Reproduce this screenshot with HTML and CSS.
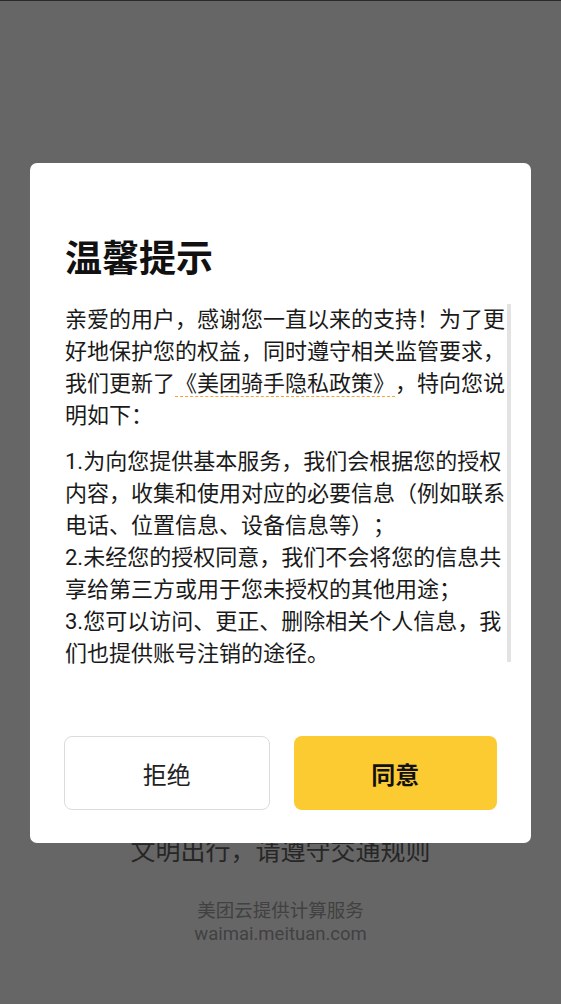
FILE: index.html
```html
<!DOCTYPE html>
<html lang="zh-CN">
<head>
  <meta charset="UTF-8" />
  <meta name="viewport" content="width=device-width, initial-scale=1.0"/>
  <title>温馨提示</title>
  <link rel="stylesheet" href="styles.css">
</head>
<body>
  <!-- page behind the dimmed overlay -->
  <div class="page">
    <p class="slogan">文明出行，请遵守交通规则</p>
    <div class="footer">
      <p>美团云提供计算服务</p>
      <p>waimai.meituan.com</p>
    </div>
  </div>

  <!-- privacy dialog -->
  <div class="dialog">
    <h1 class="dialog-title">温馨提示</h1>
    <div class="dialog-body">
      <div class="dialog-text">
        <p class="intro">亲爱的用户，感谢您一直以来的支持！为了更好地保护您的权益，同时遵守相关监管要求，我们更新了<a class="policy" href="#">《美团骑手隐私政策》</a>，特向您说明如下：</p>
        <p>1.为向您提供基本服务，我们会根据您的授权内容，收集和使用对应的必要信息（例如联系电话、位置信息、设备信息等）；</p>
        <p>2.未经您的授权同意，我们不会将您的信息共享给第三方或用于您未授权的其他用途；</p>
        <p>3.您可以访问、更正、删除相关个人信息，我们也提供账号注销的途径。</p>
      </div>
      <div class="scrollbar"></div>
    </div>
    <div class="dialog-actions">
      <button class="btn btn-refuse">拒绝</button>
      <button class="btn btn-agree">同意</button>
    </div>
  </div>
</body>
</html>
```

FILE: styles.css
```css
* {
  box-sizing: border-box;
  margin: 0;
  padding: 0;
}

body {
  font-family: Roboto, "Noto Sans CJK SC", sans-serif;
  text-spacing-trim: space-all;
  background: #666666;
  border-top: 1px solid #2a2a2a;
  height: 1004px;
  overflow: hidden;
}

.page {
  display: flex;
  flex-direction: column;
  align-items: center;
  padding-top: 834px;
}

.slogan {
  font-size: 25px;
  line-height: 34px;
  color: #262626;
}

.footer {
  margin-top: 31px;
  text-align: center;
  font-size: 18.5px;
  line-height: 23px;
  color: #414141;
}

/* Dialog lies over the page */
.dialog {
  position: absolute;
  top: 163px;
  left: 30px;
  width: 501px;
  height: 680px;
  background: #fff;
  border-radius: 7px;
  display: flex;
  flex-direction: column;
  padding: 72px 0 33px 0;
}

.dialog-title {
  margin-left: 35px;
  font-size: 37px;
  line-height: 50px;
  font-weight: 700;
  color: #111;
}

.dialog-body {
  display: flex;
  margin-top: 19px;
  margin-left: 35px;
}

.dialog-text {
  width: 442px;
  font-size: 22px;
  line-height: 32px;
  color: #1a1a1a;
}

.dialog-text .intro {
  margin-bottom: 14px;
}

.policy {
  color: #1a1a1a;
  text-decoration: underline dashed #f2a33a;
  text-decoration-thickness: 1px;
  text-underline-offset: 5px;
}

.scrollbar {
  width: 4px;
  height: 358px;
  background: #e3e3e3;
}

.dialog-actions {
  margin-top: auto;
  display: flex;
  gap: 24px;
  padding: 0 34px 0 34px;
}

.btn {
  flex: 1;
  height: 74px;
  border-radius: 8px;
  font-family: inherit;
  font-size: 24px;
  cursor: pointer;
}

.btn-refuse {
  background: #fff;
  border: 1px solid #dcdcdc;
  color: #222;
}

.btn-agree {
  background: #fcca31;
  border: none;
  color: #111;
  font-weight: 700;
}
```
